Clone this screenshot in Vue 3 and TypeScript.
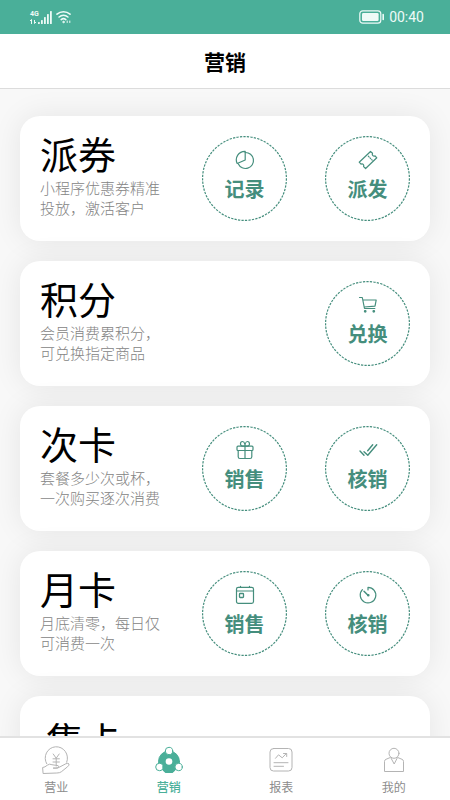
<script setup lang="ts">
import { ref } from 'vue'

type IconName = 'pie' | 'ticket' | 'cart' | 'gift' | 'checks' | 'calendar' | 'timer'
type TabName = 'business' | 'marketing' | 'report' | 'mine'

interface Action {
  label: string
  icon: IconName
}

interface Card {
  title: string
  lines: string[]
  actions: Action[]
}

const cards: Card[] = [
  {
    title: '派券',
    lines: ['小程序优惠券精准', '投放，激活客户'],
    actions: [
      { label: '记录', icon: 'pie' },
      { label: '派发', icon: 'ticket' },
    ],
  },
  {
    title: '积分',
    lines: ['会员消费累积分，', '可兑换指定商品'],
    actions: [{ label: '兑换', icon: 'cart' }],
  },
  {
    title: '次卡',
    lines: ['套餐多少次或杯，', '一次购买逐次消费'],
    actions: [
      { label: '销售', icon: 'gift' },
      { label: '核销', icon: 'checks' },
    ],
  },
  {
    title: '月卡',
    lines: ['月底清零，每日仅', '可消费一次'],
    actions: [
      { label: '销售', icon: 'calendar' },
      { label: '核销', icon: 'timer' },
    ],
  },
  { title: '集卡', lines: [], actions: [] },
]

const tabs: { id: TabName; label: string }[] = [
  { id: 'business', label: '营业' },
  { id: 'marketing', label: '营销' },
  { id: 'report', label: '报表' },
  { id: 'mine', label: '我的' },
]

const active = ref<TabName>('marketing')
</script>

<template>
  <div class="page">
    <div class="status">
      <div class="signal">
        <div class="network">
          <span>4G</span>
          <svg width="6" height="5" viewBox="0 0 6 5" fill="none" stroke="currentColor">
            <path d="M1.5 5V.5L0 2M4.5 1v3.5L6 3" />
          </svg>
        </div>
        <svg width="14" height="13" viewBox="0 0 14 13" fill="currentColor">
          <rect x="0" y="11" width="1.8" height="2" rx=".6" />
          <rect x="3" y="9" width="1.8" height="4" rx=".6" />
          <rect x="6" y="6" width="1.8" height="7" rx=".6" />
          <rect x="9" y="3" width="1.8" height="10" rx=".6" />
          <rect x="12" y="0" width="1.8" height="13" rx=".6" />
        </svg>
        <svg class="wifi" width="16" height="14" viewBox="0 0 16 14" fill="none" stroke="currentColor" stroke-width="1.6" stroke-linecap="round">
          <path d="M1 4.200a9.800 9.800 0 0 1 13 0M3.100 7a6.900 6.900 0 0 1 8.800 0M5.200 9.600a3.600 3.600 0 0 1 4.600 0" />
          <circle cx="7.500" cy="12" r=".8" fill="currentColor" stroke-width=".8" />
          <path d="M11.200 11v1.500M13.800 11v1.500" stroke-width="1" />
        </svg>
      </div>
      <div class="clock">
        <svg width="26" height="14" viewBox="0 0 26 14" fill="none">
          <rect x=".8" y=".8" width="21" height="12.400" rx="3" stroke="currentColor" stroke-width="1.200" />
          <rect x="3" y="3" width="16.600" height="8" rx="1.200" fill="currentColor" />
          <path d="M24.200 4.500v5" stroke="currentColor" stroke-width="1.600" stroke-linecap="round" />
        </svg>
        <time>00:40</time>
      </div>
    </div>

    <header class="header">
      <h1>营销</h1>
    </header>

    <main class="content">
      <section v-for="card in cards" :key="card.title" class="card" :class="{ plain: !card.actions.length }">
        <div class="info">
          <h2>{{ card.title }}</h2>
          <p v-if="card.lines.length">
            <span v-for="line in card.lines" :key="line">{{ line }}</span>
          </p>
        </div>
        <div v-if="card.actions.length" class="actions">
          <button v-for="action in card.actions" :key="action.icon" type="button" class="action">
            <svg class="ring" viewBox="0 0 85 85" fill="none" stroke="currentColor" aria-hidden="true">
              <circle cx="42.500" cy="42.500" r="41.900" stroke-width="1.200" stroke-dasharray="2.300 1.200" />
            </svg>
            <svg class="icon" viewBox="0 0 20 20" fill="none" stroke="currentColor" stroke-width="1.200" stroke-linecap="round" stroke-linejoin="round" aria-hidden="true">
              <template v-if="action.icon === 'pie'">
                <path d="M10.200 2.500A8 8 0 1 1 3.200 13.800" />
                <path d="M10.200 1.300A8.500 8.500 0 0 0 2.200 13.500L10.200 10z" />
              </template>
              <template v-else-if="action.icon === 'ticket'">
                <path d="M12.500 1.500l2 1.700c-.8 1.900.9 3.500 2.600 2.700l1.700 1.900L7.600 18.500l-2-1.900c.7-1.700-.8-3.300-2.600-2.500l-1.800-1.900z" />
                <path d="M10.300 6.200l.7.700M12 7.900l.7.700M13.700 9.600l.5.500" />
              </template>
              <template v-else-if="action.icon === 'cart'">
                <path d="M1.500 2.500h2.800l2.200 11h10.300M4.900 5h13.300l-1.200 6.200-10.800.8" />
                <circle cx="7.200" cy="16.300" r=".8" fill="currentColor" />
                <circle cx="15.800" cy="16.300" r=".8" fill="currentColor" />
              </template>
              <template v-else-if="action.icon === 'gift'">
                <rect x="2" y="6.200" width="16" height="4.300" rx="1" />
                <path d="M3.200 10.500v6.200q0 1.800 1.800 1.800h10q1.800 0 1.800-1.800v-6.200M10 6.200v12.300M10 6.200H7.500C4.800 6.200 4.800 1.500 7.500 1.500S10 6.200 10 6.200s0-4.700 2.500-4.700 2.700 4.700 0 4.700z" />
              </template>
              <template v-else-if="action.icon === 'checks'">
                <path d="M2 11l4 4.200M6 11.700l3.800 3.600L18.700 4.700M14.700 4.700L9.700 10.700" stroke-width="1.400" />
              </template>
              <template v-else-if="action.icon === 'calendar'">
                <rect x="1.500" y="2.300" width="17" height="16" rx="1.800" />
                <path d="M1.800 6h16.400M5.500 1.300v1M14.500 1.300v1" />
                <rect x="4.500" y="8.500" width="4" height="4" rx=".7" stroke-width="1.300" />
              </template>
              <template v-else>
                <path d="M10 5V2.300A7.800 7.800 0 1 1 4.400 4.700" />
                <path d="M6 6.200l4 4" stroke-width="1.500" />
                <circle cx="10.300" cy="10.300" r=".7" fill="currentColor" />
              </template>
            </svg>
            <span>{{ action.label }}</span>
          </button>
        </div>
      </section>
    </main>

    <nav class="tabs">
      <a v-for="tab in tabs" :key="tab.id" href="#" :class="{ active: active === tab.id }" @click.prevent="active = tab.id">
        <svg viewBox="0 0 30 30" fill="none" stroke="currentColor" stroke-linecap="round" stroke-linejoin="round" aria-hidden="true">
          <template v-if="tab.id === 'business'">
            <path d="M5.700 17.700A11.200 11.200 0 1 1 25.700 16.200" />
            <path d="M12.200 8l3 4.200 3-4.200M15.200 12.200V20M12 12.800h6.400M12 16h6.400" />
            <path d="M2 21.500q2-.2 4.300-2.300 2.200-1.800 4.600-.5l3.800.6q3.500 0 3 1.500-.4 1.300-3 1.300h-2.600 4.500l8.200-4.300q2.500-1.200 3.200.2.400 1.200-1.500 2.800l-6.200 5q-1.600 1.200-4.500 1.200L2.500 27.500z" />
          </template>
          <template v-else-if="tab.id === 'marketing'">
            <path d="M15 4.700L5.500 12.500 5.200 20l6 6.500h7.600l6-6.500-.3-7.500z" fill="currentColor" />
            <circle cx="15" cy="15.500" r="10.500" fill="currentColor" />
            <circle cx="15" cy="15.500" r="3.300" class="dot" stroke="none" />
            <circle cx="15" cy="5" r="3.700" class="dot" />
            <circle cx="5.400" cy="21" r="3.700" class="dot" />
            <circle cx="24.600" cy="21" r="3.700" class="dot" />
          </template>
          <template v-else-if="tab.id === 'report'">
            <rect x="4" y="2.500" width="22" height="22.500" rx="3.500" />
            <path d="M9.500 12.300l3-3.500 3.700 3 4.200-4.300M17.500 7.500h3.200v3M8 16.700h14M8 20.300h9.500" />
          </template>
          <template v-else>
            <circle cx="15" cy="7.300" r="5" />
            <path d="M10.800 11.700L7 13.300q-1.500.6-1.500 2.200v10h19v-10q0-1.600-1.500-2.200l-3.800-1.600M11.800 11.700l3.400 6.300 3.200-6.300" />
          </template>
        </svg>
        <span>{{ tab.label }}</span>
      </a>
    </nav>
  </div>
</template>

<style>
body {
  margin: 0;
}
</style>

<style scoped>
.page {
  display: flex;
  flex-direction: column;
  height: 100vh;
  background: #f8f8f8;
  font-family: "Noto Sans CJK SC", sans-serif;
}

.status {
  flex: none;
  display: flex;
  justify-content: space-between;
  align-items: center;
  height: 34px;
  padding: 0 26px 0 30px;
  box-sizing: border-box;
  background: #4aaf99;
  color: #eefaf7;
}

.signal,
.clock {
  display: flex;
  align-items: center;
}

.signal {
  gap: 4px;
}

.clock {
  gap: 4px;
  font: 14px/20px Roboto, sans-serif;
}

.network {
  display: flex;
  flex-direction: column;
  gap: 1px;
  width: 8px;
  margin-right: -4px;
  font: bold 7px/8px Roboto, sans-serif;
}

.header {
  flex: none;
  height: 54px;
  background: #fff;
  border-bottom: 1px solid #dcdcdc;
  text-align: center;
}

.header h1 {
  margin: 0;
  font-size: 21px;
  line-height: 54px;
  font-weight: 700;
  color: #000;
}

.content {
  flex: 1;
  min-height: 0;
  display: flex;
  flex-direction: column;
  gap: 20px;
  padding: 27px 20px 0;
  overflow-y: auto;
  scrollbar-width: none;
}

.card {
  flex: none;
  display: flex;
  justify-content: space-between;
  box-sizing: border-box;
  min-height: 125px;
  padding: 20px;
  border-radius: 20px;
  background: #fff;
  box-shadow: 0 0 30px rgba(0, 0, 0, 0.08);
  clip-path: none;
}

.card.plain {
  padding: 26px;
}

.info h2 {
  margin: 0;
  font-size: 38px;
  line-height: 34px;
  font-weight: 400;
  color: #000;
}

.info p {
  margin: 8px 0 0;
  font-size: 15px;
  line-height: 20px;
  font-weight: 300;
  color: #848484;
}

.info p span {
  display: block;
}

.actions {
  display: flex;
  gap: 38px;
}

.action {
  position: relative;
  display: flex;
  flex-direction: column;
  align-items: center;
  width: 85px;
  height: 85px;
  padding: 14px 0 0;
  border: 0;
  background: none;
  color: #458e7d;
  font: bold 20px/28px "Noto Sans CJK SC", sans-serif;
  cursor: pointer;
}

.ring {
  position: absolute;
  inset: 0;
}

.icon {
  width: 20px;
  height: 20px;
  margin-bottom: 5px;
}

.tabs {
  flex: none;
  display: grid;
  grid-template-columns: repeat(4, 1fr);
  height: 64px;
  box-sizing: border-box;
  border-top: 2px solid #e2e2e2;
  background: #fff;
}

.tabs a {
  display: flex;
  flex-direction: column;
  align-items: center;
  gap: 2px;
  padding-top: 8px;
  font-size: 12px;
  line-height: 18px;
  color: #8c8c8c;
  text-decoration: none;
}

.tabs svg {
  width: 30px;
  height: 30px;
  color: #b4b4b4;
}

.tabs a.active,
.tabs .active svg {
  color: #4aaf99;
}

.tabs a.active {
  font-weight: 500;
}

.dot {
  fill: #fff;
}
</style>
